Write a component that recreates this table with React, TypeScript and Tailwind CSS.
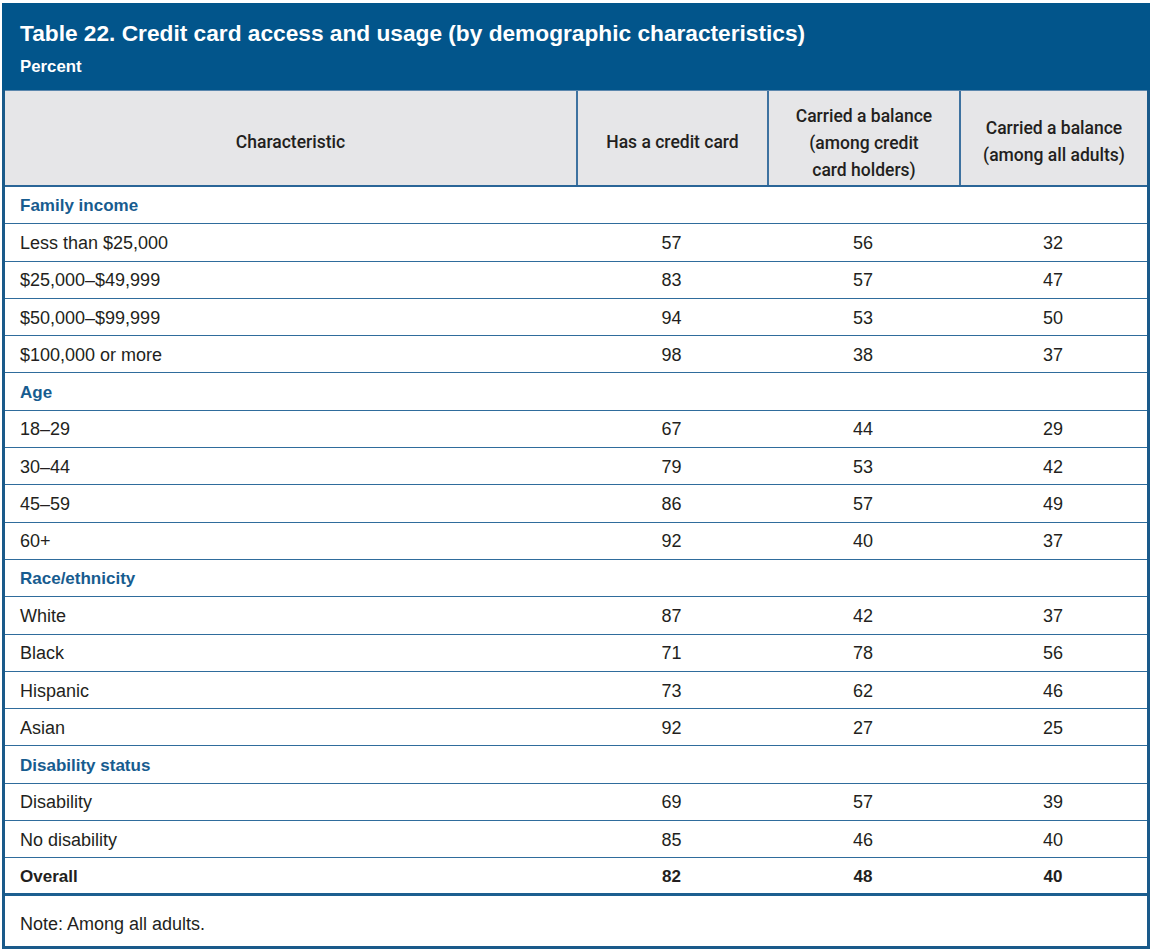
import React from "react"

type Row = { label: string; values?: [string, string, string]; kind: "cat" | "row" | "total" }

const rows: Row[] = [
    { label: "Family income", kind: "cat" },
    { label: "Less than $25,000", values: ["57", "56", "32"], kind: "row" },
    { label: "$25,000–$49,999", values: ["83", "57", "47"], kind: "row" },
    { label: "$50,000–$99,999", values: ["94", "53", "50"], kind: "row" },
    { label: "$100,000 or more", values: ["98", "38", "37"], kind: "row" },
    { label: "Age", kind: "cat" },
    { label: "18–29", values: ["67", "44", "29"], kind: "row" },
    { label: "30–44", values: ["79", "53", "42"], kind: "row" },
    { label: "45–59", values: ["86", "57", "49"], kind: "row" },
    { label: "60+", values: ["92", "40", "37"], kind: "row" },
    { label: "Race/ethnicity", kind: "cat" },
    { label: "White", values: ["87", "42", "37"], kind: "row" },
    { label: "Black", values: ["71", "78", "56"], kind: "row" },
    { label: "Hispanic", values: ["73", "62", "46"], kind: "row" },
    { label: "Asian", values: ["92", "27", "25"], kind: "row" },
    { label: "Disability status", kind: "cat" },
    { label: "Disability", values: ["69", "57", "39"], kind: "row" },
    { label: "No disability", values: ["85", "46", "40"], kind: "row" },
    { label: "Overall", values: ["82", "48", "40"], kind: "total" },
]

const cols = "grid grid-cols-[571px_191px_192px_188px]"

function TableRow({ row }: { row: Row }) {
    if (row.kind === "cat") {
        return (
            <div className="h-[37.3px] pt-[2px] flex items-center px-[15px] border-b border-[#2f6c9c] text-[17px] font-bold text-[#175c8f]">
                {row.label}
            </div>
        )
    }
    const total = row.kind === "total"
    return (
        <div
            className={`${cols} items-center pt-[2px] ${
                total
                    ? "h-[37.5px] border-b-[3px] border-[#1d5f90] text-[17px] font-bold"
                    : "h-[37.3px] border-b border-[#2f6c9c] text-[18px]"
            } text-[#231f20]`}
        >
            <div className="px-[15px]">{row.label}</div>
            {row.values?.map((v, i) => (
                <div key={i} className="text-center">
                    {v}
                </div>
            ))}
        </div>
    )
}

export default function App() {
    return (
        <div className="w-[1152px] h-[949px] bg-white pt-[3px] pl-[2px] font-['Liberation_Sans',Arial,sans-serif]">
            <div className="w-[1148px] h-[946px] flex flex-col border-x-[3px] border-b-[3px] border-[#1a5a8a]">
                <div className="h-[87px] bg-[#02558b] -mx-[3px] px-[18px] pt-[16px] text-white">
                    <h1 className="text-[22.7px] font-bold leading-[28px]">
                        Table 22. Credit card access and usage (by demographic characteristics)
                    </h1>
                    <p className="text-[16.8px] font-bold leading-[22px] mt-[9px]">Percent</p>
                </div>

                <div
                    className={`${cols} h-[97px] pt-[8px] bg-[#e6e6e8] border-t border-[#5b87ad] border-b-2 border-b-[#2a6597] font-['Roboto',sans-serif] font-medium text-[17.5px] leading-[27px] text-[#231f20] text-center`}
                >
                    <div className="flex items-center justify-center">Characteristic</div>
                    <div className="flex items-center justify-center border-l-2 border-[#3e72a0] -mt-[8px] pt-[8px]">Has a credit card</div>
                    <div className="flex items-center justify-center border-l-2 border-[#3e72a0] -mt-[8px] pt-[10px]">
                        <span>
                            Carried a balance
                            <br />
                            (among credit
                            <br />
                            card holders)
                        </span>
                    </div>
                    <div className="flex items-center justify-center border-l-2 border-[#3e72a0] -mt-[8px] pt-[8px]">
                        <span>
                            Carried a balance
                            <br />
                            (among all adults)
                        </span>
                    </div>
                </div>

                {rows.map((r) => (
                    <TableRow key={r.label} row={r} />
                ))}

                <div className="flex-1 flex items-center px-[15px] pt-[8px] text-[18px] text-[#231f20]">
                    Note: Among all adults.
                </div>
            </div>
        </div>
    )
}
